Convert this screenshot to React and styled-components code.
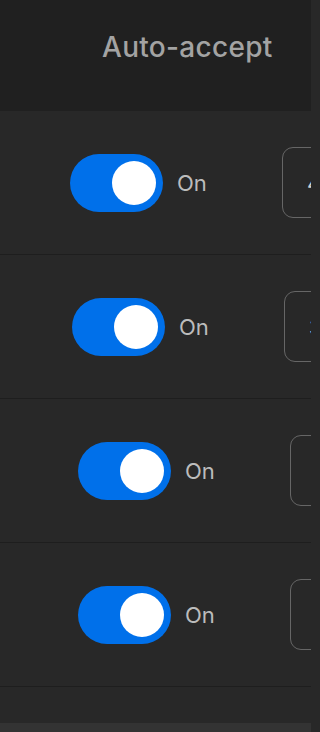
import React from "react";
import styled, { createGlobalStyle } from "styled-components";

const rows = [
  { id: 1, shift: 70, on: true, limit: "4" },
  { id: 2, shift: 72, on: true, limit: "3" },
  { id: 3, shift: 78, on: true, limit: "2" },
  { id: 4, shift: 78, on: true, limit: "2" },
];

const GlobalStyle = createGlobalStyle`
  html, body {
    margin: 0;
    padding: 0;
    background: #282828;
  }
  body {
    font-family: Inter, "Noto Sans", "Liberation Sans", sans-serif;
    -webkit-font-smoothing: antialiased;
  }
`;

const App = () => {
  return (
    <>
      <GlobalStyle />
      <Page>
        <HeaderRow>
          <HeaderLabel>Auto-accept</HeaderLabel>
        </HeaderRow>
        {rows.map((row) => (
          <Row key={row.id} $shift={row.shift}>
            <ToggleCell>
              <Switch $on={row.on}>
                <Knob />
              </Switch>
              <SwitchText>{row.on ? "On" : "Off"}</SwitchText>
            </ToggleCell>
            <LimitBox>{row.limit}</LimitBox>
          </Row>
        ))}
        <Filler />
        <BottomBar />
      </Page>
    </>
  );
};

const Page = styled.div`
  width: 311px;
  height: 732px;
  overflow: hidden;
  display: flex;
  flex-direction: column;
  background: #282828;
`;

const HeaderRow = styled.div`
  height: 111px;
  flex-shrink: 0;
  background: #202020;
  display: flex;
  align-items: flex-start;
  padding: 27px 0 0 102px;
  box-sizing: border-box;
`;

const HeaderLabel = styled.div`
  font-size: 28px;
  line-height: 40px;
  font-weight: 500;
  color: #a3a3a3;
  letter-spacing: 0.3px;
  white-space: nowrap;
`;

const Row = styled.div`
  height: 144px;
  flex-shrink: 0;
  box-sizing: border-box;
  border-bottom: 1px solid #1e1e1e;
  display: flex;
  align-items: center;
  padding-left: ${(p) => p.$shift}px;
`;

const ToggleCell = styled.div`
  width: 212px;
  flex-shrink: 0;
  display: flex;
  align-items: center;
  gap: 14px;
`;

const Switch = styled.div`
  width: 93px;
  height: 58px;
  border-radius: 29px;
  background: ${(p) => (p.$on ? "#0070ea" : "#4a4a4a")};
  display: flex;
  align-items: center;
  justify-content: ${(p) => (p.$on ? "flex-end" : "flex-start")};
  padding: 0 7px;
  box-sizing: border-box;
`;

const Knob = styled.div`
  width: 44px;
  height: 44px;
  border-radius: 50%;
  background: #ffffff;
`;

const SwitchText = styled.span`
  font-size: 22px;
  color: #bcbcbc;
`;

const LimitBox = styled.div`
  width: 90px;
  height: 71px;
  flex-shrink: 0;
  box-sizing: border-box;
  border: 1.5px solid #666666;
  border-radius: 11px;
  display: flex;
  align-items: center;
  padding-left: 24px;
  font-size: 22px;
  color: #d0d0d0;
`;

const Filler = styled.div`
  flex: 1;
`;

const BottomBar = styled.div`
  height: 9px;
  flex-shrink: 0;
  background: #333333;
`;

export default App;
